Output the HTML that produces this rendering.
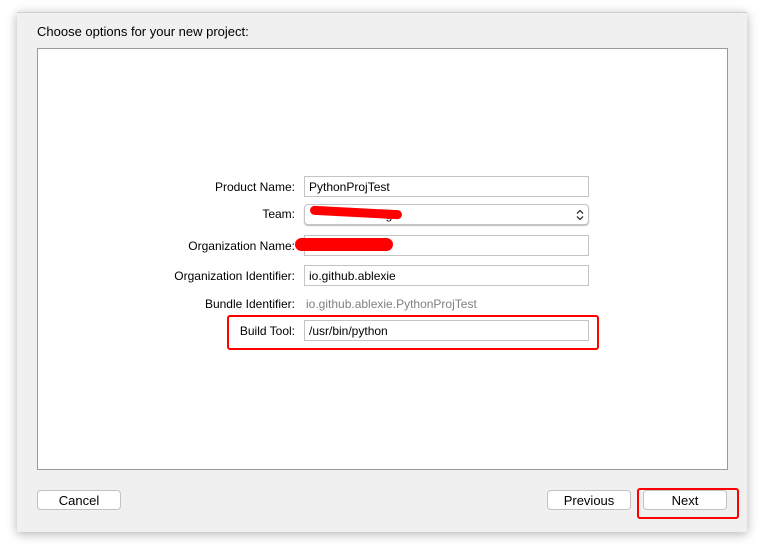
<!DOCTYPE html><html><head><style>
body{margin:0;width:764px;height:552px;background:#fff;position:relative;overflow:hidden;font-family:"Liberation Sans",sans-serif;font-size:12px;color:#000}
.a{position:absolute}
.dlg{left:17px;top:12px;width:730px;height:519px;background:#f0f0f0;box-shadow:0 2px 10px rgba(0,0,0,.3);border-top:1px solid #d0d0d0}
.panel{left:37px;top:48px;width:689px;height:420px;background:#fff;border:1px solid #9a9a9a}
.lbl{width:200px;text-align:right;left:95px}
.inp{left:304px;height:21px;border:1px solid #c4c4c4;background:#fff;line-height:20px;padding-left:4px;box-sizing:border-box;width:285px}
.btn{height:20px;background:#fff;border:1px solid #c2c2c2;border-radius:4px;text-align:center;line-height:19px;font-size:13px;box-sizing:border-box}
.red{border:2px solid #f00;border-radius:3px}
</style></head><body>
<div class="a dlg"></div>
<div class="a" style="left:37px;top:24px;font-size:13px">Choose options for your new project:</div>
<div class="a panel"></div>
<div class="a lbl" style="top:180px">Product Name:</div>
<div class="a inp" style="top:176px">PythonProjTest</div>
<div class="a lbl" style="top:207px">Team:</div>
<div class="a inp" style="top:204px;border-radius:4px;box-shadow:0 1px 1px #bbb">&nbsp;&nbsp;&nbsp;&nbsp;&nbsp;&nbsp;&nbsp;&nbsp;&nbsp;&nbsp;&nbsp;&nbsp;&nbsp;&nbsp;&nbsp;&nbsp;&nbsp;&nbsp;&nbsp;&nbsp;&nbsp;&nbsp;&nbsp;g
<svg style="position:absolute;right:4px;top:4px" width="8" height="12" viewBox="0 0 8 12"><path d="M1 4.5L4 1.5L7 4.5M1 7.5L4 10.5L7 7.5" fill="none" stroke="#333" stroke-width="1.3"/></svg></div>
<div class="a" style="left:310px;top:208px;width:92px;height:9px;background:#f00;border-radius:5px;transform:rotate(3deg)"></div>
<div class="a lbl" style="top:239px">Organization Name:</div>
<div class="a inp" style="top:235px"></div>
<div class="a" style="left:295px;top:238px;width:98px;height:13px;background:#f00;border-radius:7px"></div>
<div class="a lbl" style="top:269px">Organization Identifier:</div>
<div class="a inp" style="top:265px">io.github.ablexie</div>
<div class="a lbl" style="top:297px">Bundle Identifier:</div>
<div class="a" style="left:306px;top:297px;color:#808080">io.github.ablexie.PythonProjTest</div>
<div class="a red" style="left:227px;top:315px;width:368px;height:31px"></div>
<div class="a lbl" style="top:324px">Build Tool:</div>
<div class="a inp" style="top:320px">/usr/bin/python</div>
<div class="a btn" style="left:37px;top:490px;width:84px">Cancel</div>
<div class="a btn" style="left:547px;top:490px;width:84px">Previous</div>
<div class="a btn" style="left:643px;top:490px;width:84px">Next</div>
<div class="a red" style="left:637px;top:488px;width:98px;height:27px"></div>
</body></html>
